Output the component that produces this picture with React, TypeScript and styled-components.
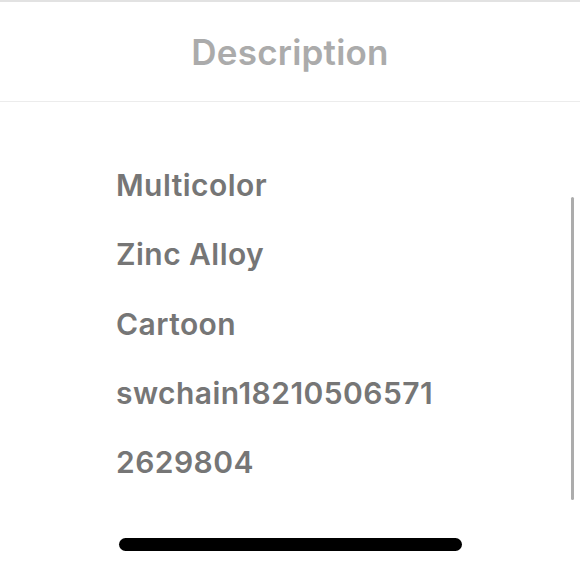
import React from 'react';
import styled, { createGlobalStyle } from 'styled-components';

const GlobalStyle = createGlobalStyle`
  html, body {
    margin: 0;
    padding: 0;
    background: #ffffff;
  }
`;

const Screen = styled.div`
  position: relative;
  width: 580px;
  height: 580px;
  overflow: hidden;
  background: #ffffff;
  font-family: Inter, 'Liberation Sans', sans-serif;
`;

const Header = styled.div`
  display: flex;
  align-items: center;
  justify-content: center;
  box-sizing: border-box;
  height: 102px;
  border-top: 2px solid #e2e2e2;
  border-bottom: 1px solid #ececec;
`;

const Title = styled.h1`
  margin: 0;
  font-size: 35px;
  font-weight: 600;
  color: #ababab;
  letter-spacing: 0.2px;
`;

const List = styled.ul`
  list-style: none;
  margin: 0;
  padding: 63px 0 0 116px;
  display: flex;
  flex-direction: column;
`;

const Item = styled.li`
  height: 69.3px;
  font-size: 30px;
  font-weight: 600;
  color: #767676;
  line-height: 40px;
  letter-spacing: 0.45px;
`;

const ScrollIndicator = styled.div`
  position: absolute;
  right: 6px;
  top: 197px;
  width: 3px;
  height: 303px;
  border-radius: 2px;
  background: #acacac;
`;

const HomeIndicator = styled.div`
  position: absolute;
  left: 119px;
  top: 538px;
  width: 343px;
  height: 13px;
  border-radius: 7px;
  background: #000000;
`;

const items = ['Multicolor', 'Zinc Alloy', 'Cartoon', 'swchain18210506571', '2629804'];

const App: React.FC = () => {
  return (
    <Screen>
      <GlobalStyle />
      <Header>
        <Title>Description</Title>
      </Header>
      <List>
        {items.map((text) => (
          <Item key={text}>{text}</Item>
        ))}
      </List>
      <ScrollIndicator />
      <HomeIndicator />
    </Screen>
  );
};

export default App;
